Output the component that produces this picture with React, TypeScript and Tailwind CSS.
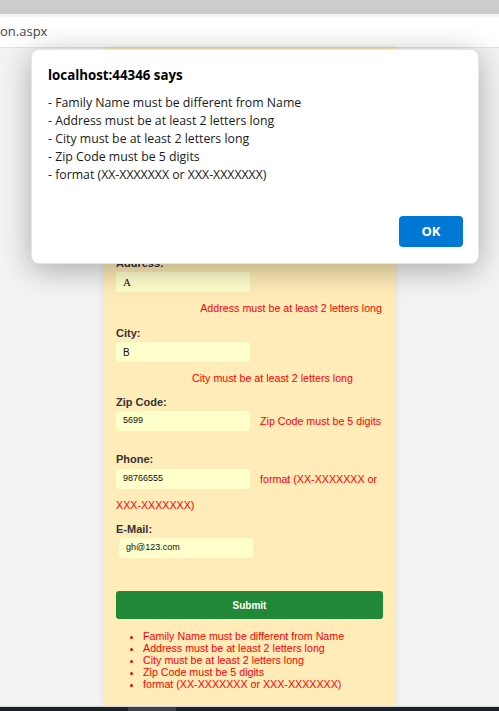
// Registration form page with the browser's alert dialog on top
const ERRORS = [
  "Family Name must be different from Name",
  "Address must be at least 2 letters long",
  "City must be at least 2 letters long",
  "Zip Code must be 5 digits",
  "format (XX-XXXXXXX or XXX-XXXXXXX)",
]

const arial = "font-['Liberation_Sans',Arial,sans-serif]"
const err = `${arial} whitespace-nowrap text-[10.7px] leading-[14px] text-[#ff0000]`

function Label({ children }: { children: React.ReactNode }) {
  return (
    <div className={`${arial} h-[14px] text-[11px] leading-[14px] font-bold text-[#333]`}>
      {children}
    </div>
  )
}

function Field({ value, serif = false, className = "" }: { value: string; serif?: boolean; className?: string }) {
  return (
    <div
      className={`h-[20px] w-[134px] shrink-0 rounded-[3px] bg-[#ffffcc] pl-[7px] flex items-center text-[#111] ${
        serif ? "font-['Liberation_Serif',serif] text-[11px]" : `${arial} text-[9px]`
      } ${className}`}
    >
      {value}
    </div>
  )
}

export default function App() {
  return (
    <div className="relative flex h-[711px] w-[499px] flex-col overflow-hidden bg-[#f3f3f3]">
      {/* browser chrome */}
      <div className="h-[14px] bg-[#cccccc]" />
      <div className="h-[3px] bg-[#f3f3f3]" />
      <div className="flex h-[31px] items-center bg-white border-b border-[#e2e2e2] font-['Open_Sans',sans-serif] text-[13px] text-[#444]">
        on.aspx
      </div>

      {/* page */}
      <div className="flex-1">
        <div className="mx-auto h-full w-[293px] bg-[#ffecb8] pl-[13px] pr-[14px] pt-[208px] shadow-[0_0_6px_rgba(0,0,0,0.08)]">
          <Label>Address:</Label>
          <Field value="A" serif className="mt-[2px]" />
          <div className={`${err} mt-[9px] text-right`}>Address must be at least 2 letters long</div>

          <div className="mt-[11px]">
            <Label>City:</Label>
          </div>
          <Field value="B" className="mt-[2px] text-[10px]" />
          <div className={`${err} mt-[9px] pl-[76px]`}>City must be at least 2 letters long</div>

          <div className="mt-[10px]">
            <Label>Zip Code:</Label>
          </div>
          <div className="mt-[2px] flex items-center gap-[10px]">
            <Field value="5699" />
            <span className={err}>Zip Code must be 5 digits</span>
          </div>

          <div className="mt-[21px]">
            <Label>Phone:</Label>
          </div>
          <div className="mt-[3px] flex items-center gap-[10px]">
            <Field value="98766555" />
            <span className={err}>format (XX-XXXXXXX or</span>
          </div>
          <div className={`${err} mt-[9px]`}>XXX-XXXXXXX)</div>

          <div className="mt-[10px]">
            <Label>E-Mail:</Label>
          </div>
          <Field value="gh@123.com" className="mt-[2px] ml-[3px]" />

          <button
            type="button"
            className={`${arial} mt-[33px] h-[28px] w-[267px] rounded-[3px] bg-[#218838] text-[10px] font-bold text-white`}
          >
            Submit
          </button>

          <ul className={`${arial} mt-[11px] list-disc pl-[27px] text-[10.7px] leading-[12px] text-[#ff0000]`}>
            {ERRORS.map((e) => (
              <li key={e}>{e}</li>
            ))}
          </ul>
        </div>
      </div>

      {/* bottom edge */}
      <div className="h-px bg-[#d6d6d6]" />
      <div className="flex h-[4px] bg-[#1b2327]">
        <div className="ml-[128px] w-[48px] bg-[#3b4348]" />
      </div>

      {/* alert dialog */}
      <div className="absolute left-[31px] top-[49px] h-[215px] w-[448px] rounded-[8px] border border-black/10 bg-white shadow-[0_6px_30px_rgba(0,0,0,0.3)] font-['Open_Sans',sans-serif]">
        <div className="pl-[16px] pt-[15px] text-[13.3px] leading-[20px] font-bold text-black">localhost:44346 says</div>
        <div className="mt-[9px] pl-[16px] text-[12.3px] leading-[18px] text-[#1a1a1a]">
          {ERRORS.map((e) => (
            <div key={e}>- {e}</div>
          ))}
        </div>
        <button
          type="button"
          className="absolute right-[15px] bottom-[16px] h-[31px] w-[64px] rounded-[4px] bg-[#0078d4] text-[13px] font-bold text-white"
        >
          OK
        </button>
      </div>
    </div>
  )
}
